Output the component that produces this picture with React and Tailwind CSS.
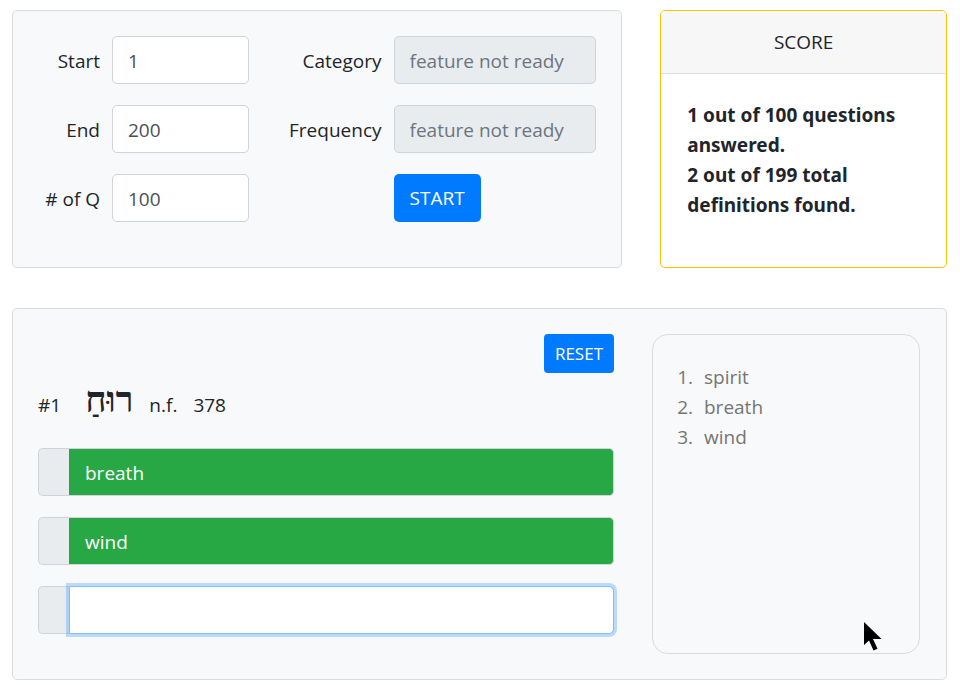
import React, { useState } from "react";

const LABEL = "whitespace-nowrap pt-[2px] text-right";
const FIELD =
  "h-12 w-full min-w-0 rounded-[5px] border border-[#ced4da] bg-white px-[15px] pt-px text-[#495057] outline-none";
const FIELD_DISABLED =
  "h-12 w-full min-w-0 rounded-[5px] border border-[#ced4da] bg-[#e9ecef] px-[15px] pt-px placeholder:text-[#6c757d] outline-none";

function SettingsCard() {
  return (
    <form
      className="rounded-[5px] border border-[#dadbdd] bg-[#f8f9fa] p-[25px] pb-[45px]"
      onSubmit={(e) => e.preventDefault()}
    >
      <div className="grid grid-cols-[62px_136fr_121px_202fr] items-center gap-x-3 gap-y-[21px]">
        <label htmlFor="start" className={LABEL}>Start</label>
        <input id="start" type="text" defaultValue="1" className={FIELD} />
        <label htmlFor="category" className={LABEL}>Category</label>
        <input id="category" type="text" disabled placeholder="feature not ready" className={FIELD_DISABLED} />

        <label htmlFor="end" className={LABEL}>End</label>
        <input id="end" type="text" defaultValue="200" className={FIELD} />
        <label htmlFor="frequency" className={LABEL}>Frequency</label>
        <input id="frequency" type="text" disabled placeholder="feature not ready" className={FIELD_DISABLED} />

        <label htmlFor="count" className={LABEL}># of Q</label>
        <input id="count" type="text" defaultValue="100" className={FIELD} />
        <button
          type="submit"
          className="col-start-4 h-12 justify-self-start rounded-[5px] bg-[#007bff] px-4 text-white"
        >
          START
        </button>
      </div>
    </form>
  );
}

function ScoreCard() {
  return (
    <section className="overflow-hidden rounded-[5px] border border-[#ffc107] bg-white">
      <h2 className="border-b border-[#dfdfdf] bg-[#f7f7f7] py-4 text-center">SCORE</h2>
      <div className="px-[26px] py-[26px] font-['Noto_Sans','Open_Sans',sans-serif] font-bold">
        <p>1 out of 100 questions answered.</p>
        <p>2 out of 199 total definitions found.</p>
      </div>
    </section>
  );
}

function Answer({ label, value, state, onChange }) {
  return (
    <div className="flex h-12">
      <span className="w-[31px] shrink-0 rounded-l-[5px] border border-r-0 border-[#ced4da] bg-[#e9ecef]" />
      {state === "correct" ? (
        <input
          aria-label={label}
          readOnly
          value={value}
          className="min-w-0 flex-1 rounded-r-[5px] border border-l-0 border-[#ced4da] bg-[#28a745] px-4 pt-px text-white outline-none"
        />
      ) : (
        <input
          aria-label={label}
          value={value}
          onChange={onChange}
          className="min-w-0 flex-1 rounded-r-[5px] border border-[#80bdff] bg-white px-4 pt-px text-[#495057] shadow-[0_0_0_3px_rgba(0,123,255,0.25)] outline-none"
        />
      )}
    </div>
  );
}

function Pointer() {
  return (
    <svg
      aria-hidden="true"
      viewBox="0 0 18 29"
      className="pointer-events-none absolute right-[37px] bottom-[2px] h-[29px] w-[18px]"
    >
      <path d="M0 0V23L5 18.5L9.5 28.5L13.5 26.8L9 17H17.5Z" fill="#000" />
    </svg>
  );
}

function QuizCard() {
  const [guess, setGuess] = useState("");
  return (
    <section className="grid grid-cols-[576fr_268fr] gap-x-[38px] rounded-[5px] border border-[#dadbdd] bg-[#f8f9fa] py-[25px] pr-[26px] pl-[25px]">
      <div className="flex flex-col">
        <button
          type="button"
          className="h-[39px] self-end rounded-[4px] bg-[#007bff] px-[11px] text-[17px] leading-6 text-white"
        >
          RESET
        </button>
        <div className="flex h-[75px] items-baseline pt-[7px]">
          <span className="mr-6">#1</span>
          <span
            lang="he"
            dir="rtl"
            className="mr-4 font-['Liberation_Serif','DejaVu_Sans',serif] text-[36px] font-bold leading-10"
          >
            רוּחַ
          </span>
          <span className="mr-4">n.f.</span>
          <span>378</span>
        </div>
        <div className="flex flex-col gap-[21px]">
          <Answer label="Definition 1" value="breath" state="correct" />
          <Answer label="Definition 2" value="wind" state="correct" />
          <Answer label="Definition 3" value={guess} state="open" onChange={(e) => setGuess(e.target.value)} />
        </div>
      </div>
      <aside className="relative min-h-80 rounded-[16px] border border-[#dadbdd] px-[25px] py-[27px] text-[#757575]">
        <ol className="list-decimal pl-5">
          <li className="pl-[6px]">spirit</li>
          <li className="pl-[6px]">breath</li>
          <li className="pl-[6px]">wind</li>
        </ol>
        <Pointer />
      </aside>
    </section>
  );
}

export default function App() {
  return (
    <main className="bg-white pt-[10px] pr-[13px] pb-1 pl-3 font-['Open_Sans','Noto_Sans',sans-serif] text-[19px] leading-[30px] text-[#212529]">
      <div className="mb-10 grid grid-cols-[611fr_287fr] gap-x-[38px]">
        <SettingsCard />
        <ScoreCard />
      </div>
      <QuizCard />
    </main>
  );
}
